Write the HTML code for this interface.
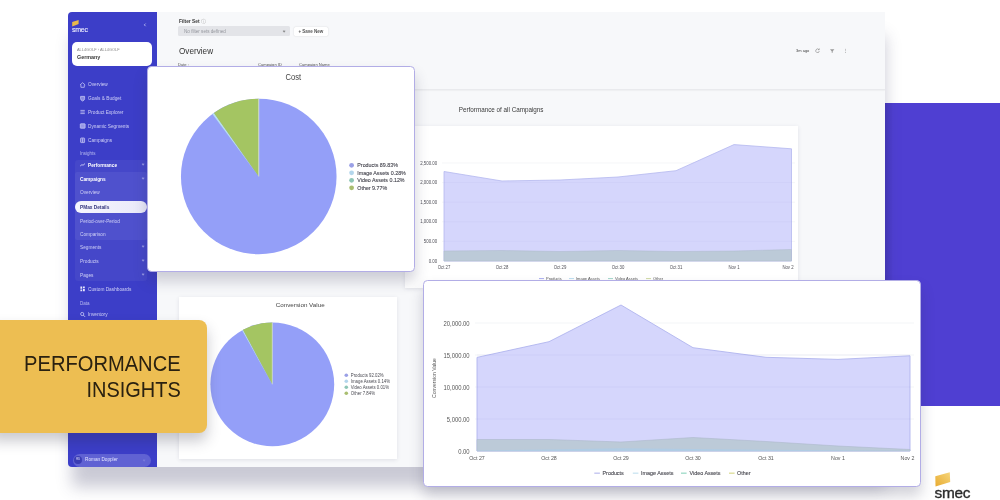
<!DOCTYPE html>
<html lang="en">
<head>
<meta charset="utf-8">
<title>Performance Insights</title>
<style>
*{box-sizing:border-box;margin:0;padding:0}
html,body{position:relative;width:1000px;height:500px;overflow:hidden;background:#fff;font-family:"Liberation Sans",sans-serif;color:#333}
.abs{position:absolute}
#stage{position:absolute;left:-10px;top:-10px;width:1020px;height:520px;overflow:hidden;background:#fff;filter:blur(.35px)}
#inner{position:absolute;left:10px;top:10px;width:1000px;height:500px}
#win{left:68px;top:12px;width:817px;height:454.5px;background:#f7f8fa;border-radius:4px 0 0 4px;box-shadow:2px 22px 16px -2px rgba(60,60,100,.27)}
#side{left:0;top:0;width:89px;height:454.5px;background:#3c3ec8;border-radius:4px 0 0 4px;color:#fff;overflow:hidden}
#purple{left:885px;top:103px;width:125px;height:302.5px;background:#4f3fd2}
#purple:before{content:"";position:absolute;left:0;top:0;width:8px;height:100%;background:linear-gradient(90deg,rgba(30,20,120,.22),rgba(30,20,120,0))}
.nav{position:absolute;left:20px;font-size:4.75px;line-height:6px;color:#cfd0f6;white-space:nowrap}
.nav.b{font-weight:bold;color:#fff}
.nav.s{left:12px;color:#b9bbf0;font-size:4.5px}
.nav.i{left:12px}
.ico{position:absolute;left:12px;width:5px;height:5px;border:1px solid #e4e4fb;border-radius:1px}
.chev{position:absolute;left:74px;width:2.2px;height:2.2px;border-right:.7px solid #a9abec;border-bottom:.7px solid #a9abec;transform:rotate(45deg);opacity:.8}
.card{position:absolute;background:#fff;border:1.2px solid #b2ade6;border-radius:4.5px;box-shadow:0 9px 14px rgba(50,50,80,.22)}
.flat{position:absolute;background:#fff;box-shadow:0 1px 4px rgba(60,60,90,.12)}
.t{position:absolute;white-space:nowrap;line-height:1}
svg{position:absolute;left:0;top:0;overflow:visible}
svg text{font-family:"Liberation Sans",sans-serif}
#yellow{left:-10px;top:319.7px;width:216.6px;height:113px;background:#edbe52;border-radius:0 8px 8px 0;box-shadow:0 8px 14px rgba(40,40,60,.25)}
#yellow div{position:absolute;right:26.1px;white-space:nowrap;font-size:22.2px;line-height:1;color:#2a2110;transform:scaleX(.9);transform-origin:100% 50%}
</style>
</head>
<body>
<div id="stage"><div id="inner">

<div id="purple" class="abs"></div>

<div id="win" class="abs">
  <div id="side" class="abs">
    <svg width="89" height="40" viewBox="0 0 89 40">
      <path d="M4.2 9.9 L10.6 7.9 L10.6 12.1 L4.2 14.4 Z" fill="#e9b949"/>
      <text x="3.9" y="19.6" font-size="7" fill="#ededff" letter-spacing="-.2" stroke="#ededff" stroke-width=".1">smec</text>
      <path d="M77.6 11.6 L76.3 12.9 L77.6 14.2" stroke="#c9cbf5" stroke-width=".8" fill="none"/>
    </svg>
    <div class="abs" style="left:3.7px;top:30px;width:80.3px;height:24.4px;background:#fff;border-radius:5px"></div>
    <div class="t" style="left:9px;top:36.2px;font-size:3.9px;color:#888">ALL4GOLF › ALL4GOLF</div>
    <div class="t" style="left:9px;top:42.6px;font-size:5.4px;font-weight:bold;color:#3a3a3a">Germany</div>

    
    <div class="nav" style="top:70.0px">Overview</div>
    <div class="nav" style="top:83.8px">Goals &amp; Budget</div>
    <div class="nav" style="top:97.5px">Product Explorer</div>
    <div class="nav" style="top:111.5px">Dynamic Segments</div>
    <div class="nav" style="top:125.5px">Campaigns</div>
    <div class="nav s" style="top:139.0px">Insights</div>

    <div class="abs" style="left:7px;top:147.5px;width:71.5px;height:121.5px;background:#4547c9;border-radius:3px"></div>
    <div class="abs" style="left:7px;top:160px;width:71.5px;height:67.5px;background:#4f51cd;border-radius:2px"></div>
    <svg width="89" height="454" viewBox="0 0 89 454" fill="none" stroke="#c9cbf6" stroke-width=".75">
      <!-- home -->
      <path d="M12 73 L14.6 70.7 L17.2 73 M12.9 72.8 V75.3 H16.3 V72.8"/>
      <!-- shield -->
      <path d="M12.6 84.4 H16.6 V86.6 Q16.6 88.3 14.6 89 Q12.6 88.3 12.6 86.6 Z" fill="#d4d5f8" fill-opacity=".5"/>
      <!-- list -->
      <path d="M12.4 98.4 H16.8 M12.4 100 H16.8 M12.4 101.6 H16.8"/>
      <!-- table -->
      <rect x="12.3" y="111.8" width="4.8" height="4.4" rx=".5" fill="#d4d5f8" fill-opacity=".6"/>
      <!-- campaigns -->
      <rect x="12.6" y="126" width="4" height="4.6" rx=".6" fill="#d4d5f8" fill-opacity=".3"/><path d="M14.6 126.4V130.2"/>
      <!-- performance line -->
      <path d="M12.2 154 L14 152.6 L15 153.3 L17 151.6" stroke="#e6e7fc"/>
      <!-- dashboards -->
      <path d="M12.4 274.6 h1.8 v2.2 h-1.8z M15 274.6 h1.8 v1.6 h-1.8z M12.4 277.6 h1.8 v1.6 h-1.8z M15 277 h1.8 v2.2 h-1.8z" fill="#e6e7fc" stroke="none"/>
      <!-- inventory -->
      <circle cx="14.2" cy="302" r="1.6"/><path d="M15.4 303.2 L17 304.8" stroke-width="1"/>
    </svg>
    <div class="nav b" style="top:150.5px">Performance</div><div class="chev" style="top:150.5px"></div>
    <div class="nav b i" style="top:164.5px">Campaigns</div><div class="chev" style="top:164.5px"></div>
    <div class="nav i" style="top:178.0px">Overview</div>
    <div class="abs" style="left:6.5px;top:188.5px;width:72px;height:12px;background:linear-gradient(90deg,#f6f6fe,#e9e9f9);border-radius:6px"></div>
    <div class="nav b i" style="top:192.5px;color:#34367f">PMax Details</div>
    <div class="nav i" style="top:206.5px">Period-over-Period</div>
    <div class="nav i" style="top:220.0px">Comparison</div>
    <div class="nav i" style="top:233.0px">Segments</div><div class="chev" style="top:233px"></div>
    <div class="nav i" style="top:247.0px">Products</div><div class="chev" style="top:247px"></div>
    <div class="nav i" style="top:261.0px">Pages</div><div class="chev" style="top:261px"></div>
    <div class="nav" style="top:274.5px">Custom Dashboards</div>
    <div class="nav s" style="top:289.0px">Data</div>
    <div class="nav" style="top:300.0px">Inventory</div>

    <div class="abs" style="left:4.6px;top:441.8px;width:78.6px;height:13px;background:#6062d3;border-radius:6.5px"></div>
    <div class="abs" style="left:6.4px;top:443.8px;width:8px;height:8px;background:#3a3cb4;border-radius:50%"></div>
    <div class="t" style="left:8.3px;top:446.6px;font-size:2.6px;color:#e8e8ff">RD</div>
    <div class="t" style="left:17px;top:446.4px;font-size:4.7px;color:#e4e5ff">Roman Doppler</div>
    <div class="chev" style="top:446.5px;left:74.5px;opacity:.35"></div>
  </div>

  <!-- header -->
  <div class="t" style="left:111px;top:8.1px;font-size:4.8px;font-weight:bold;color:#3a3a3a">Filter Set <span style="font-weight:normal;color:#aaa">ⓘ</span></div>
  <div class="abs" style="left:110.3px;top:14.3px;width:112px;height:9.8px;background:#e3e4e8;border-radius:1.5px"></div>
  <div class="t" style="left:116px;top:18px;font-size:4.6px;color:#94969d">No filter sets defined</div>
  <div class="chev" style="left:215px;top:17.6px;border-color:#777;width:2.2px;height:2.2px"></div>
  <div class="abs" style="left:226.4px;top:15.3px;width:33.6px;height:8.4px;background:#fff;border-radius:1.5px;box-shadow:0 0 1.5px rgba(0,0,0,.18)"></div>
  <div class="t" style="left:230.4px;top:18.1px;font-size:4.5px;font-weight:bold;color:#555">+ Save New</div>
  <div class="t" style="left:110.8px;top:34.6px;font-size:8.9px;color:#333;transform:scaleX(.92);transform-origin:0 50%">Overview</div>
  <div class="t" style="left:110px;top:51.4px;font-size:4.1px;color:#555">Date :</div>
  <div class="t" style="left:190px;top:51.4px;font-size:4.1px;color:#555">Campaign ID</div>
  <div class="t" style="left:231px;top:51.4px;font-size:4.1px;color:#555">Campaign Name</div>
  <div class="t" style="left:728px;top:36.5px;font-size:4px;color:#444">3m ago</div>
  <svg width="817" height="60" viewBox="0 0 817 60">
    <path d="M750.8 37.5 a1.8 1.8 0 1 0 .5 1.5 M751.3 36.4 v1.3 h-1.3" stroke="#777" stroke-width=".55" fill="none"/>
    <path d="M762 37.3 h4.4 l-1.7 2 v1.4 h-1 v-1.4 z" fill="#999" stroke="none"/>
    <circle cx="777.4" cy="37.2" r=".42" fill="#666"/><circle cx="777.4" cy="38.8" r=".42" fill="#666"/><circle cx="777.4" cy="40.4" r=".42" fill="#666"/>
  </svg>
  <div class="abs" style="left:89px;top:77.2px;width:728px;height:1px;background:#e9eaed;box-shadow:0 1px 1px rgba(0,0,0,.04)"></div>
  <div class="t" style="left:390.8px;top:95.3px;font-size:6.3px;color:#3a3a3a">Performance of all Campaigns</div>
</div>

<!-- back area chart -->
<div class="flat" style="left:404.6px;top:126px;width:393.4px;height:161.6px"></div>
<svg width="1000" height="500" viewBox="0 0 1000 500">
  <g stroke="#eef0f3" stroke-width=".6">
    <path d="M442 163H795M442 182.6H795M442 202.2H795M442 221.8H795M442 241.4H795"/>
  </g>
  <path d="M444 171.5 L502 181 L560 180 L618 177 L676 170.7 L734 144.6 L791.5 148.8 L791.5 261 L444 261 Z" fill="#d5d6fc" stroke="#b4b8ef" stroke-width=".8"/>
  <path d="M444 182.6H791.5M444 202.2H791.5M444 221.8H791.5M444 241.4H791.5" stroke="rgba(90,90,180,.07)" stroke-width=".6"/>
  <path d="M444 251 L502 250.5 L560 251.5 L618 250.5 L676 251.5 L734 251 L791.5 249.5 L791.5 261 L444 261 Z" fill="#bccad8" stroke="#adb9cb" stroke-width=".5"/>
  <g font-size="4.77" fill="#505058" text-anchor="end">
    <text transform="translate(437.2 164.6) scale(.92 1)">2,500.00</text><text transform="translate(437.2 184.2) scale(.92 1)">2,000.00</text><text transform="translate(437.2 203.8) scale(.92 1)">1,500.00</text>
    <text transform="translate(437.2 223.4) scale(.92 1)">1,000.00</text><text transform="translate(437.2 243) scale(.92 1)">500.00</text><text transform="translate(437.2 262.6) scale(.92 1)">0.00</text>
  </g>
  <g font-size="4.67" fill="#505058" text-anchor="middle">
    <text transform="translate(444 268.6) scale(.92 1)">Oct 27</text><text transform="translate(502 268.6) scale(.92 1)">Oct 28</text><text transform="translate(560 268.6) scale(.92 1)">Oct 29</text>
    <text transform="translate(618 268.6) scale(.92 1)">Oct 30</text><text transform="translate(676 268.6) scale(.92 1)">Oct 31</text><text transform="translate(734 268.6) scale(.92 1)">Nov 1</text><text transform="translate(788 268.6) scale(.92 1)">Nov 2</text>
  </g>
  <g font-size="4.34" fill="#555">
    <path d="M539 278.6h5" stroke="#a9adf0" stroke-width="1"/><text transform="translate(546 280) scale(.92 1)">Products</text>
    <path d="M569 278.6h5" stroke="#b9dcef" stroke-width="1"/><text transform="translate(576 280) scale(.92 1)">Image Assets</text>
    <path d="M608 278.6h5" stroke="#9fd6c8" stroke-width="1"/><text transform="translate(615 280) scale(.92 1)">Video Assets</text>
    <path d="M646 278.6h5" stroke="#cfd9a0" stroke-width="1"/><text transform="translate(653 280) scale(.92 1)">Other</text>
  </g>
</svg>

<!-- conversion value pie (back) -->
<div class="flat" style="left:179px;top:296.5px;width:217.8px;height:162.7px"></div>
<svg width="1000" height="500" viewBox="0 0 1000 500">
  <text x="300.2" y="306.6" font-size="6.25" fill="#444" text-anchor="middle">Conversion Value</text>
  <circle cx="272.3" cy="384.35" r="61.9" fill="#949ff8"/>
  <path d="M272.3 384.35 L242.01 330.37 A61.9 61.9 0 0 1 243.05 329.80 Z" fill="#b7e0f0"/>
  <path d="M272.3 384.35 L242.95 329.85 A61.9 61.9 0 0 1 272.30 322.45 Z" fill="#a4c562"/>
  <path d="M272.3 384.35 V322.45000000000005" stroke="#e9f0dc" stroke-width=".6"/>
  <g font-size="4.7" fill="#4a4a52">
    <circle cx="346.3" cy="375.2" r="1.8" fill="#9aa0e6"/><text transform="translate(350.8 376.6) scale(.92 1)">Products 92.02%</text>
    <circle cx="346.3" cy="381.3" r="1.8" fill="#b3d6ec"/><text transform="translate(350.8 382.7) scale(.92 1)">Image Assets 0.14%</text>
    <circle cx="346.3" cy="387.3" r="1.8" fill="#8ec6b6"/><text transform="translate(350.8 388.7) scale(.92 1)">Video Assets 0.01%</text>
    <circle cx="346.3" cy="393.3" r="1.8" fill="#a9be70"/><text transform="translate(350.8 394.7) scale(.92 1)">Other 7.84%</text>
  </g>
</svg>

<!-- Cost card (front) -->
<div class="card" style="left:147px;top:66px;width:267.6px;height:205.8px"></div>
<svg width="1000" height="500" viewBox="0 0 1000 500">
  <text x="293.4" y="79.8" font-size="8.6" fill="#444" text-anchor="middle" textLength="15.6" lengthAdjust="spacingAndGlyphs">Cost</text>
  <circle cx="258.75" cy="176.45" r="77.8" fill="#949ff8"/>
  <path d="M258.75 176.45 L212.36 113.99 A77.8 77.8 0 0 1 214.01 112.80 Z" fill="#b7e0f0"/>
  <path d="M258.75 176.45 L213.90 112.88 A77.8 77.8 0 0 1 258.75 98.65 Z" fill="#a4c562"/>
  <path d="M258.75 176.45 V98.64999999999999" stroke="#e9f0dc" stroke-width=".7"/>
  <g font-size="5.80" fill="#42424c" stroke="#42424c" stroke-width=".1">
    <circle stroke="none" cx="351.6" cy="165.3" r="2.4" fill="#9aa0e6"/><text transform="translate(357.3 167.3) scale(.92 1)">Products 89.83%</text>
    <circle stroke="none" cx="351.6" cy="172.8" r="2.4" fill="#b3d6ec"/><text transform="translate(357.3 174.8) scale(.92 1)">Image Assets 0.28%</text>
    <circle stroke="none" cx="351.6" cy="180.3" r="2.4" fill="#8ec6b6"/><text transform="translate(357.3 182.3) scale(.92 1)">Video Assets 0.12%</text>
    <circle stroke="none" cx="351.6" cy="187.8" r="2.4" fill="#a9be70"/><text transform="translate(357.3 189.8) scale(.92 1)">Other 9.77%</text>
  </g>
</svg>

<!-- front area chart card -->
<div class="card" style="left:422.8px;top:279.8px;width:497.8px;height:207.1px"></div>
<svg width="1000" height="500" viewBox="0 0 1000 500">
  <g stroke="#eef0f3" stroke-width=".7">
    <path d="M475 323H914M475 355H914M475 387H914M475 419H914"/>
  </g>
  <path d="M477 357.4 L549 341.7 L621 305 L693 347.7 L766 357.3 L838 359.4 L910 355.8 L910 451 L477 451 Z" fill="#d5d6fc" stroke="#b0b4ee" stroke-width=".9"/>
  <path d="M477 439.5 L549 439.5 L621 442 L693 437.5 L766 441.5 L838 446 L910 449.5 L910 451 L477 451 Z" fill="#bccad8" stroke="#adb9cb" stroke-width=".6"/>
  <path d="M477 450.4 L549 449.6 L621 448.3 L693 449 L766 449.8 L838 450.3 L910 450.7 L910 451 L477 451 Z" fill="#b0cce4"/>
  <path d="M477 355H910M477 387H910M477 419H910" stroke="rgba(90,90,180,.07)" stroke-width=".8"/>
  <g font-size="6.40" fill="#555" text-anchor="end">
    <text transform="translate(469.6 325.6) scale(.92 1)">20,000.00</text><text transform="translate(469.6 357.6) scale(.92 1)">15,000.00</text><text transform="translate(469.6 389.6) scale(.92 1)">10,000.00</text>
    <text transform="translate(469.6 421.6) scale(.92 1)">5,000.00</text><text transform="translate(469.6 453.6) scale(.92 1)">0.00</text>
  </g>
  <text transform="translate(436.3 378) rotate(-90)" font-size="5.1" fill="#555" text-anchor="middle">Conversion Value</text>
  <g font-size="5.75" fill="#555" text-anchor="middle">
    <text transform="translate(477 460.3) scale(.92 1)">Oct 27</text><text transform="translate(549 460.3) scale(.92 1)">Oct 28</text><text transform="translate(621 460.3) scale(.92 1)">Oct 29</text>
    <text transform="translate(693 460.3) scale(.92 1)">Oct 30</text><text transform="translate(766 460.3) scale(.92 1)">Oct 31</text><text transform="translate(838 460.3) scale(.92 1)">Nov 1</text><text transform="translate(907.5 460.3) scale(.92 1)">Nov 2</text>
  </g>
  <g font-size="5.86" fill="#4a4a52" stroke="#4a4a52" stroke-width=".12">
    <path d="M594.3 473.2h5.6" stroke="#c3c5f0" stroke-width="1.4"/><text transform="translate(602.5 475) scale(.92 1)">Products</text>
    <path d="M632.8 473.2h5.6" stroke="#cde6f2" stroke-width="1.4"/><text transform="translate(641 475) scale(.92 1)">Image Assets</text>
    <path d="M681 473.2h5.6" stroke="#a3ddcb" stroke-width="1.4"/><text transform="translate(689.5 475) scale(.92 1)">Video Assets</text>
    <path d="M729 473.2h5.6" stroke="#dedf9e" stroke-width="1.4"/><text transform="translate(737 475) scale(.92 1)">Other</text>
  </g>
</svg>

<!-- yellow title box -->
<div id="yellow" class="abs">
  <div style="top:33.3px;transform:scaleX(.907)">PERFORMANCE</div>
  <div style="top:59.8px">INSIGHTS</div>
</div>

<!-- smec logo bottom-right -->
<svg width="1000" height="500" viewBox="0 0 1000 500">
  <defs><linearGradient id="lg" x1="1" y1="0" x2="0" y2="1"><stop offset="0" stop-color="#f6d67c"/><stop offset="1" stop-color="#e8aa30"/></linearGradient></defs>
  <path d="M935.3 476.2 L949.8 472.3 L950.2 482 L935.5 486.6 Z" fill="url(#lg)"/>
  <text x="934.4" y="497.8" font-size="15.4" fill="#2a2a2a" stroke="#2a2a2a" stroke-width=".35" letter-spacing="-.2">smec</text>
</svg>

</div></div>
</body>
</html>
